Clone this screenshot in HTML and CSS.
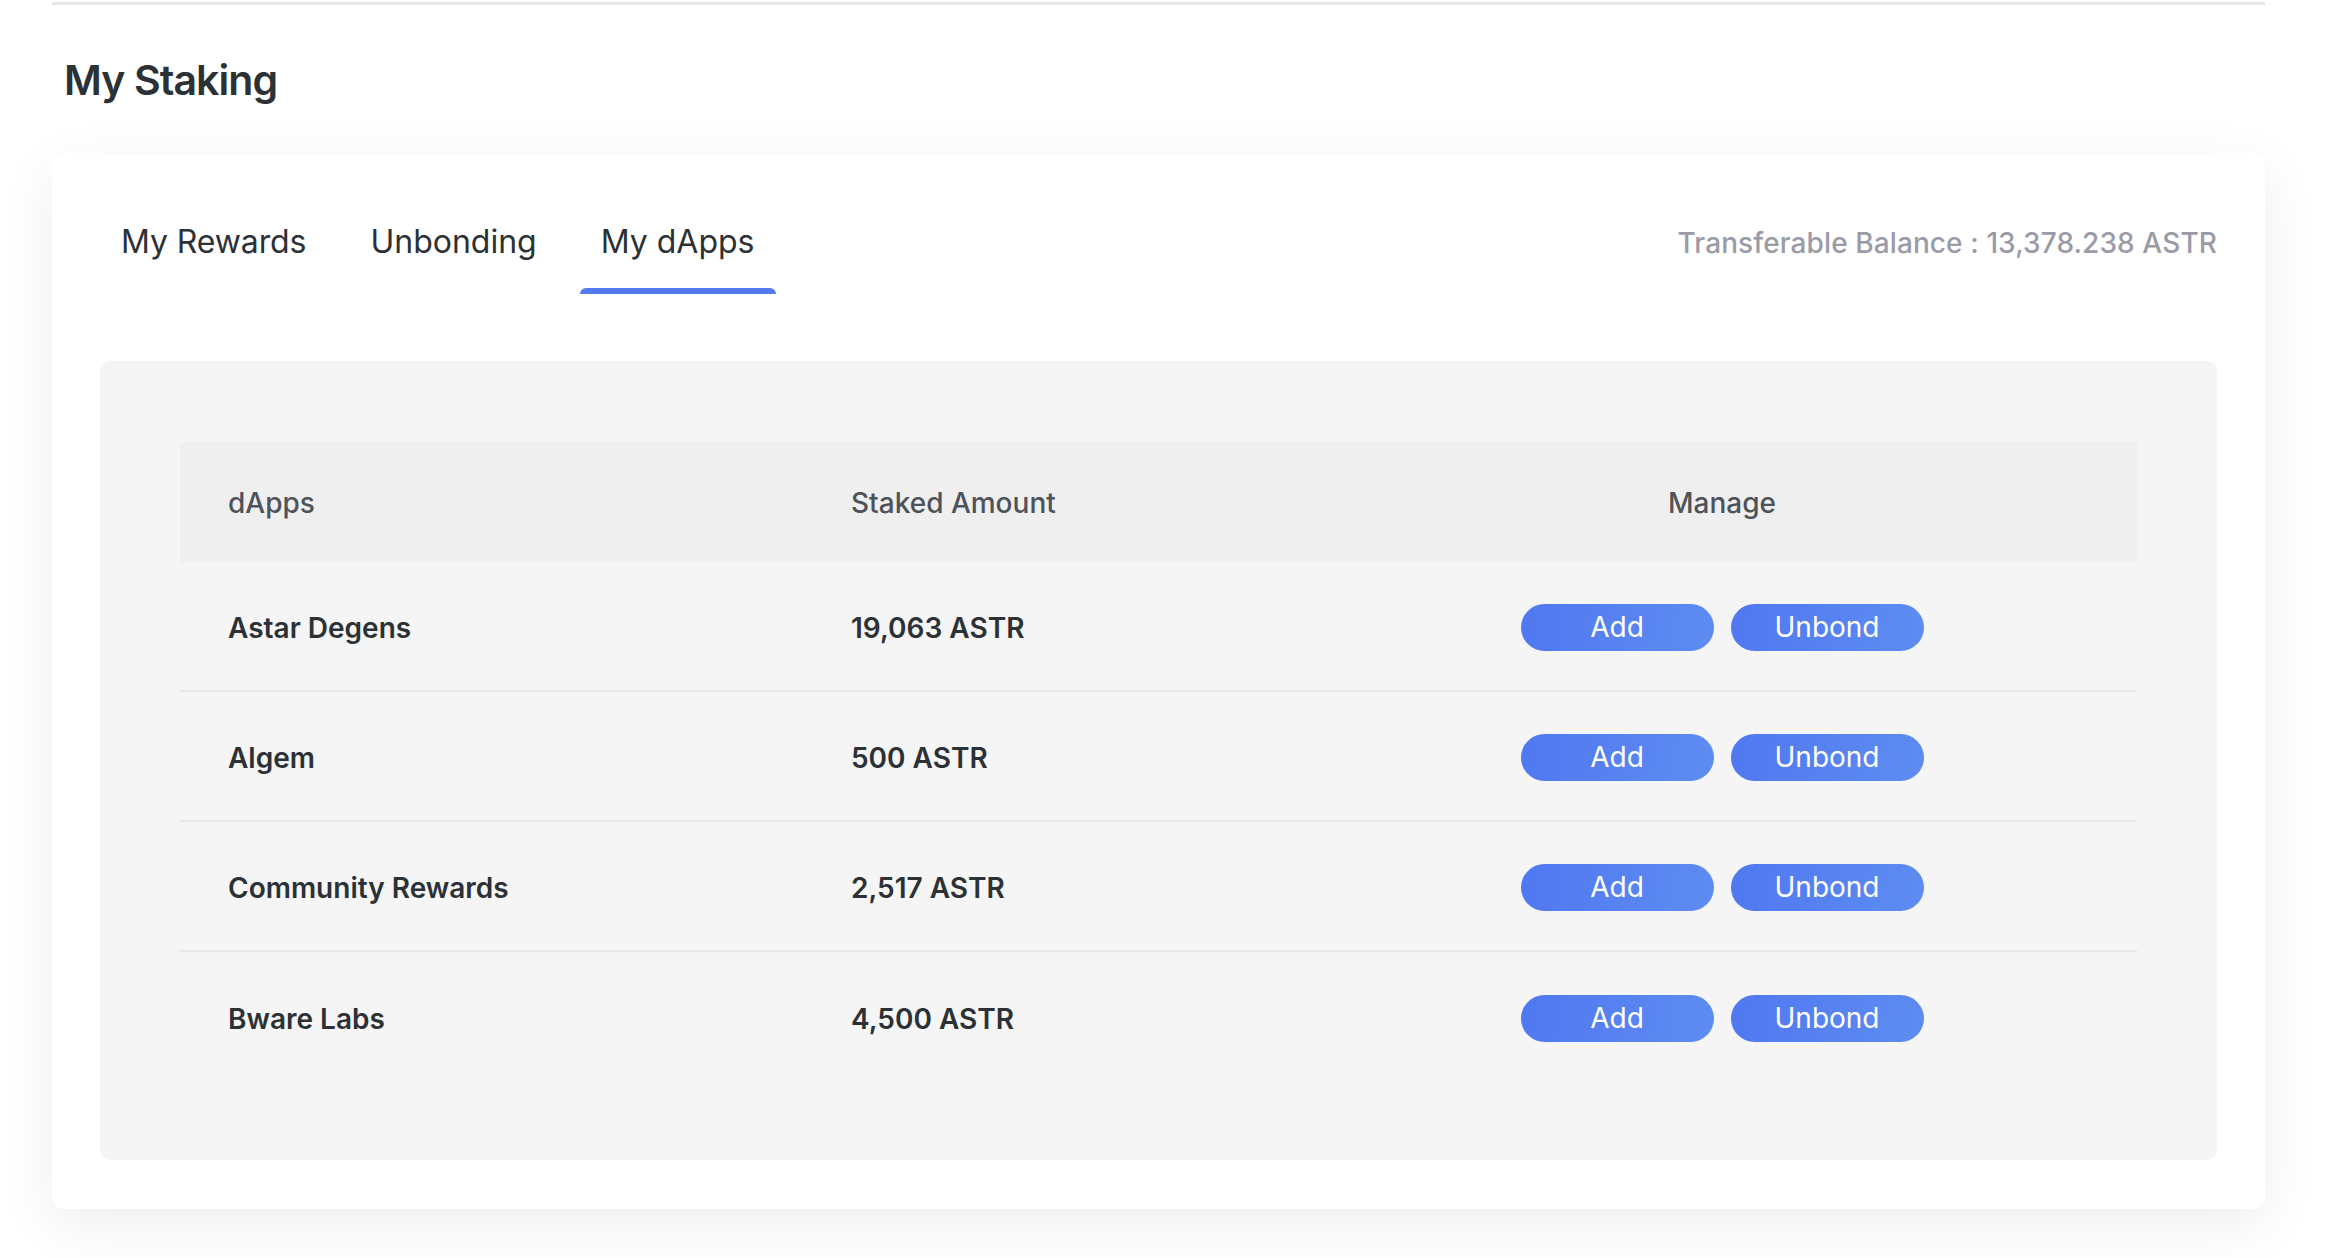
FILE: index.html
```html
<!DOCTYPE html>
<html lang="en">
<head>
<meta charset="utf-8">
<title>My Staking</title>
<link rel="stylesheet" href="styles.css">
</head>
<body>
<div class="page">
  <div class="topline"></div>
  <h1 class="title">My Staking</h1>
  <section class="card">
    <div class="card-head">
      <nav class="tabs">
        <div class="tab">My Rewards</div>
        <div class="tab">Unbonding</div>
        <div class="tab active">My dApps</div>
      </nav>
      <div class="balance">Transferable Balance : 13,378.238 ASTR</div>
    </div>
    <div class="panel">
      <div class="table">
        <div class="row head">
          <div class="cell">dApps</div>
          <div class="cell">Staked Amount</div>
          <div class="cell center">Manage</div>
        </div>
        <div class="row">
          <div class="cell name">Astar Degens</div>
          <div class="cell amount">19,063 ASTR</div>
          <div class="cell center"><div class="btns"><button class="btn">Add</button><button class="btn">Unbond</button></div></div>
        </div>
        <div class="row">
          <div class="cell name">Algem</div>
          <div class="cell amount">500 ASTR</div>
          <div class="cell center"><div class="btns"><button class="btn">Add</button><button class="btn">Unbond</button></div></div>
        </div>
        <div class="row">
          <div class="cell name">Community Rewards</div>
          <div class="cell amount">2,517 ASTR</div>
          <div class="cell center"><div class="btns"><button class="btn">Add</button><button class="btn">Unbond</button></div></div>
        </div>
        <div class="row last">
          <div class="cell name">Bware Labs</div>
          <div class="cell amount">4,500 ASTR</div>
          <div class="cell center"><div class="btns"><button class="btn">Add</button><button class="btn">Unbond</button></div></div>
        </div>
      </div>
    </div>
  </section>
</div>
</body>
</html>
```

FILE: styles.css
```css
* { box-sizing: border-box; }
html, body {
  margin: 0;
  padding: 0;
  background: #ffffff;
  font-family: Inter, "Noto Sans", "Liberation Sans", sans-serif;
  color: #2c3136;
}
.page {
  width: 2332px;
  height: 1258px;
  padding: 2px 67px 0 52px;
  overflow: hidden;
}
.topline {
  height: 3px;
  background: #e6e6ea;
}
.title {
  margin: 0;
  padding: 2px 0 0 12px;
  height: 148px;
  display: flex;
  align-items: center;
  font-size: 41px;
  font-weight: 600;
  letter-spacing: -0.9px;
  color: #2c3136;
  line-height: 1;
}
.card {
  background: #ffffff;
  border-radius: 12px;
  box-shadow: 0 16px 60px rgba(0, 0, 0, 0.07);
  padding: 48px 48px 49px 48px;
  height: 1056px;
}
.card-head {
  display: flex;
  justify-content: space-between;
  align-items: flex-start;
}
.tabs {
  display: flex;
  gap: 22px;
}
.tab {
  padding: 21px 21px 26px;
  font-size: 32px;
  line-height: 40px;
  font-weight: 400;
  color: #2c3136;
  border-bottom: 6px solid transparent;
  letter-spacing: 0px;
}
.tab:first-child { letter-spacing: -0.1px; }
.tab.active {
  border-bottom: none;
  position: relative;
  padding-bottom: 32px;
}
.tab.active::after {
  content: "";
  position: absolute;
  left: 0;
  right: 0;
  bottom: 0;
  height: 6px;
  background: #5579f1;
  border-radius: 6px 6px 0 0;
}
.balance {
  padding-top: 22px;
  line-height: 40px;
  font-size: 28px;
  font-weight: 500;
  color: #9a9ba7;
  letter-spacing: 0.1px;
}
.panel {
  margin-top: 67px;
  background: #f5f5f5;
  border-radius: 10px;
  padding: 81px 80px 78px;
}
.table {
  display: flex;
  flex-direction: column;
}
.row {
  display: grid;
  grid-template-columns: 623px 504px 1fr;
  align-items: center;
  height: 130px;
  border-bottom: 2px solid #e6e6eb;
}
.row.last { border-bottom: none; }
.row.head {
  height: 120px;
  background: #efefef;
  border-bottom: none;
}
.cell {
  padding-left: 48px;
  padding-top: 3px;
  font-size: 28px;
  line-height: 36px;
}
.head .cell {
  font-weight: 500;
  color: #4e525a;
  padding-top: 2px;
}
.cell.center {
  padding-left: 0;
  display: flex;
  justify-content: center;
}
.name, .amount {
  font-weight: 600;
  color: #2c3136;
}
.btns {
  display: flex;
  gap: 17px;
}
.btn {
  width: 193px;
  height: 47px;
  border: none;
  border-radius: 24px;
  background: linear-gradient(100deg, #5078f1 0%, #5e8cf1 100%);
  color: #ffffff;
  font-family: Inter, "Noto Sans", "Liberation Sans", sans-serif;
  font-size: 28px;
  font-weight: 400;
  padding: 0;
  line-height: 47px;
}
```
